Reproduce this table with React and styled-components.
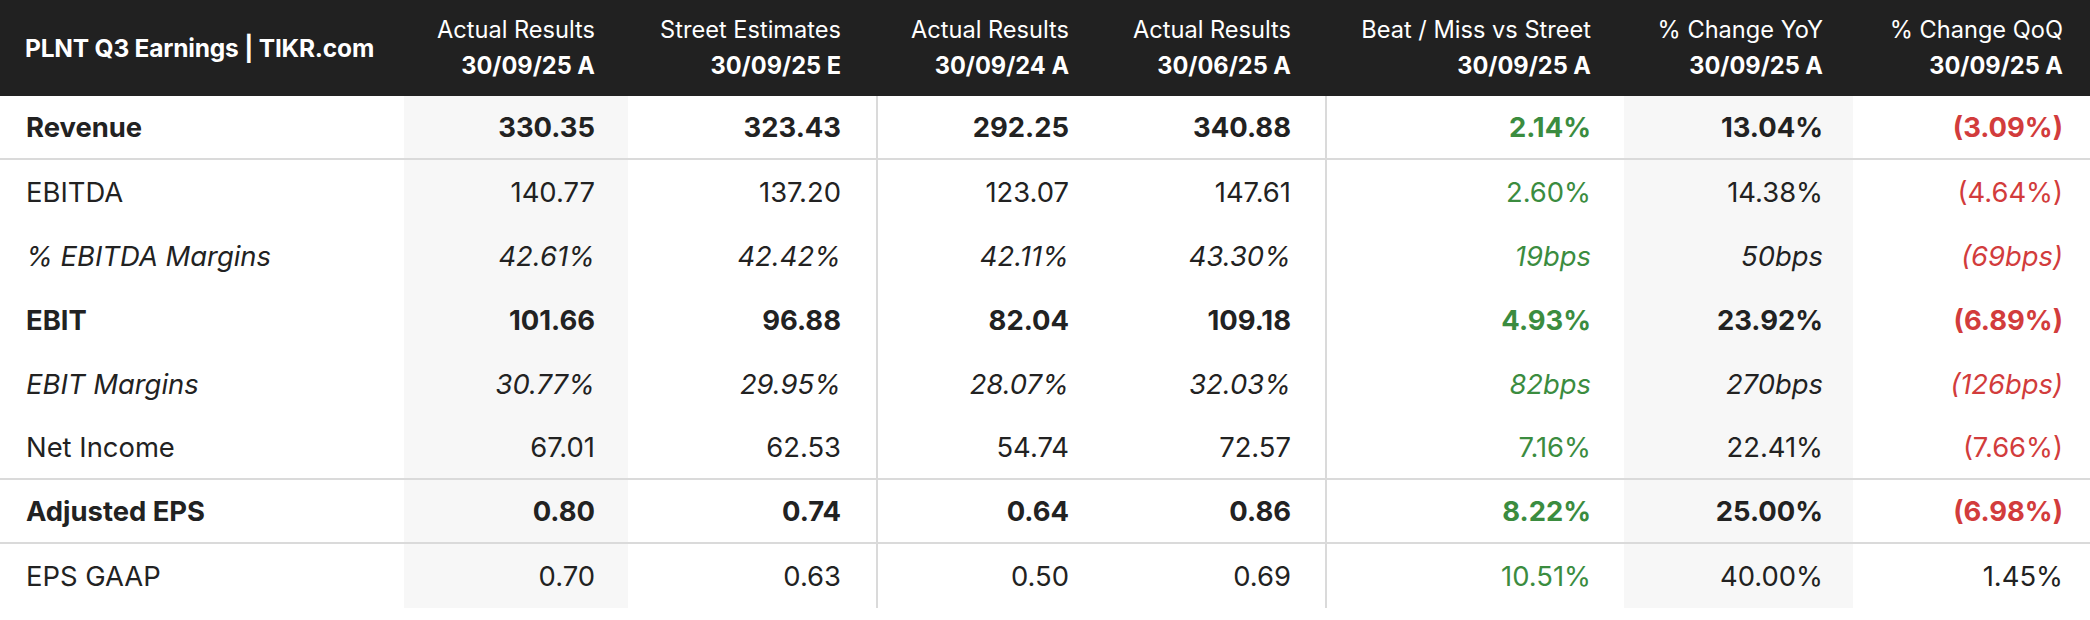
import React from 'react';
import styled, { createGlobalStyle } from 'styled-components';

const GlobalStyle = createGlobalStyle`
  html, body {
    margin: 0;
    padding: 0;
    background: #ffffff;
  }
  body {
    font-family: Inter, "Noto Sans", sans-serif;
    color: #222222;
  }
`;

const columns = '404px 224px 248px 225px 224px 299px 229px 237px';
const padRight = [0, 33, 35, 32, 34, 33, 30, 27];
const shaded = [false, true, false, false, false, false, true, false];
const divided = [false, false, false, true, false, true, false, false];

const headers = [
  ['Actual Results', '30/09/25 A'],
  ['Street Estimates', '30/09/25 E'],
  ['Actual Results', '30/09/24 A'],
  ['Actual Results', '30/06/25 A'],
  ['Beat / Miss vs Street', '30/09/25 A'],
  ['% Change YoY', '30/09/25 A'],
  ['% Change QoQ', '30/09/25 A'],
];

// tone: g = green, r = red, n = neutral
const rows = [
  { label: 'Revenue', bold: true, line: true, values: ['330.35', '323.43', '292.25', '340.88', '2.14%', '13.04%', '(3.09%)'], tones: 'nnnngnr' },
  { label: 'EBITDA', values: ['140.77', '137.20', '123.07', '147.61', '2.60%', '14.38%', '(4.64%)'], tones: 'nnnngnr' },
  { label: '% EBITDA Margins', italic: true, values: ['42.61%', '42.42%', '42.11%', '43.30%', '19bps', '50bps', '(69bps)'], tones: 'nnnngnr' },
  { label: 'EBIT', bold: true, values: ['101.66', '96.88', '82.04', '109.18', '4.93%', '23.92%', '(6.89%)'], tones: 'nnnngnr' },
  { label: 'EBIT Margins', italic: true, values: ['30.77%', '29.95%', '28.07%', '32.03%', '82bps', '270bps', '(126bps)'], tones: 'nnnngnr' },
  { label: 'Net Income', line: true, values: ['67.01', '62.53', '54.74', '72.57', '7.16%', '22.41%', '(7.66%)'], tones: 'nnnngnr' },
  { label: 'Adjusted EPS', bold: true, line: true, values: ['0.80', '0.74', '0.64', '0.86', '8.22%', '25.00%', '(6.98%)'], tones: 'nnnngnr' },
  { label: 'EPS GAAP', values: ['0.70', '0.63', '0.50', '0.69', '10.51%', '40.00%', '1.45%'], tones: 'nnnngnn' },
];

const toneColors = { n: '#222222', g: '#3b8c3f', r: '#d23c3c' };

const Page = styled.div`
  width: 2090px;
  height: 620px;
  background: #ffffff;
  overflow: hidden;
`;

const HeaderRow = styled.div`
  display: grid;
  grid-template-columns: ${columns};
  height: 96px;
  background: #212121;
  color: #ffffff;
`;

const Title = styled.div`
  display: flex;
  align-items: center;
  padding-left: 25px;
  font-size: 24.5px;
  font-weight: 700;
  letter-spacing: -0.2px;
`;

const HeadCell = styled.div`
  display: flex;
  flex-direction: column;
  justify-content: center;
  align-items: flex-end;
  padding-right: ${p => p.$pad}px;
  font-size: 23.6px;
  line-height: 36px;
  white-space: nowrap;
`;

const HeadTop = styled.span`
  font-weight: 400;
`;

const HeadDate = styled.span`
  font-weight: 700;
`;

const Row = styled.div`
  display: grid;
  grid-template-columns: ${columns};
  height: 64px;
  box-sizing: border-box;
  border-bottom: ${p => (p.$line ? '2px solid #dadada' : 'none')};
  font-size: 27.4px;
  font-weight: ${p => (p.$bold ? 700 : 400)};
  font-style: ${p => (p.$italic ? 'italic' : 'normal')};
`;

const Label = styled.div`
  display: flex;
  align-items: center;
  padding-left: 26px;
  white-space: nowrap;
`;

const Cell = styled.div`
  display: flex;
  align-items: center;
  justify-content: flex-end;
  padding-right: ${p => p.$pad}px;
  background: ${p => (p.$shaded ? '#f7f7f7' : 'transparent')};
  border-left: ${p => (p.$divider ? '2px solid #dadada' : 'none')};
  color: ${p => p.$color};
  white-space: nowrap;
`;

export default function App() {
  return (
    <Page>
      <GlobalStyle />
      <HeaderRow>
        <Title>PLNT Q3 Earnings | TIKR.com</Title>
        {headers.map(([top, date], i) => (
          <HeadCell key={i} $pad={padRight[i + 1]}>
            <HeadTop>{top}</HeadTop>
            <HeadDate>{date}</HeadDate>
          </HeadCell>
        ))}
      </HeaderRow>
      {rows.map(row => (
        <Row key={row.label} $line={row.line} $bold={row.bold} $italic={row.italic}>
          <Label>{row.label}</Label>
          {row.values.map((v, i) => (
            <Cell
              key={i}
              $pad={padRight[i + 1]}
              $shaded={shaded[i + 1]}
              $divider={divided[i + 1]}
              $color={toneColors[row.tones[i]]}
            >
              {v}
            </Cell>
          ))}
        </Row>
      ))}
    </Page>
  );
}
